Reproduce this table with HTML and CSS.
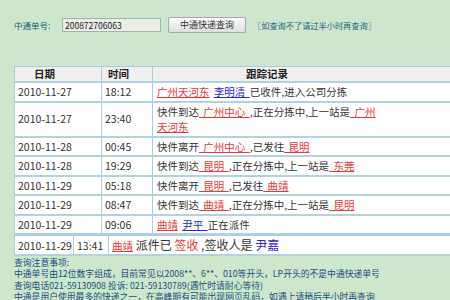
FILE: index.html
```html
<!DOCTYPE html>
<html lang="zh-CN">
<head>
<meta charset="utf-8">
<title>中通快递查询</title>
<link rel="stylesheet" href="styles.css">
</head>
<body>
<div class="page">
  <form class="search">
    <label class="label">中通单号:</label>
    <input class="num" type="text" value="200872706063">
    <button class="btn" type="button">中通快递查询</button>
    <span class="hint">〖如查询不了请过半小时再查询〗</span>
  </form>

  <table class="track">
    <colgroup><col class="c-date"><col class="c-time"><col></colgroup>
    <thead>
      <tr><th class="h-date">日期</th><th class="h-time">时间</th><th class="h-rec">跟踪记录</th></tr>
    </thead>
    <tbody>
      <tr><td>2010-11-27</td><td>18:12</td><td><div class="rec"><a class="r">广州天河东</a> <a class="b">李明清 </a>已收件,进入公司分拣</div></td></tr>
      <tr><td>2010-11-27</td><td>23:40</td><td><div class="rec">快件到达<a class="r"> 广州中心 </a>,正在分拣中,上一站是<a class="r"> 广州<br>天河东</a></div></td></tr>
      <tr><td>2010-11-28</td><td>00:45</td><td><div class="rec">快件离开<a class="r"> 广州中心 </a>,已发往<a class="r"> 昆明</a></div></td></tr>
      <tr><td>2010-11-28</td><td>19:29</td><td><div class="rec">快件到达<a class="r"> 昆明 </a>,正在分拣中,上一站是<a class="r"> 东莞</a></div></td></tr>
      <tr><td>2010-11-29</td><td>05:18</td><td><div class="rec">快件离开<a class="r"> 昆明 </a>,已发往<a class="r"> 曲靖</a></div></td></tr>
      <tr><td>2010-11-29</td><td>08:47</td><td><div class="rec">快件到达<a class="r"> 曲靖 </a>,正在分拣中,上一站是<a class="r"> 昆明</a></div></td></tr>
      <tr><td>2010-11-29</td><td>09:06</td><td><div class="rec"><a class="r">曲靖</a> <a class="b">尹平 </a>正在派件</div></td></tr>
    </tbody>
  </table>

  <table class="track last">
    <colgroup><col class="l-date"><col class="l-time"><col></colgroup>
    <tbody>
      <tr><td>2010-11-29</td><td>13:41</td><td class="big"><a class="r">曲靖</a> 派件已 <span class="red">签收</span> ,签收人是 <span class="blue">尹嘉</span></td></tr>
    </tbody>
  </table>

  <div class="notes">
    <p>查询注意事项:</p>
    <p>中通单号由12位数字组成，目前常见以2008**、6**、010等开头，LP开头的不是中通快递单号</p>
    <p>查询电话021-59130908 投诉: 021-59130789(遇忙时请耐心等待)</p>
    <p>中通是用户使用最多的快递之一，在高峰期有可能出现网页乱码，如遇上请稍后半小时再查询</p>
  </div>
</div>
</body>
</html>
```

FILE: styles.css
```css
html, body {
  margin: 0;
  padding: 0;
  overflow: hidden;
  background: #cde7cc;
}
body {
  font-family: "Noto Sans CJK SC", "Liberation Sans", sans-serif;
  color: #333;
}
.page {
  padding: 17px 0 0 14px;
  width: 500px;
}
.search {
  display: flex;
  align-items: center;
  height: 16px;
  margin: 0 0 33px 0;
}
.label {
  font-size: 8.5px;
  color: #1d5b7c;
  width: 48px;
}
.num {
  box-sizing: border-box;
  width: 99px;
  height: 14px;
  border: 1px solid #a9b0a9;
  background: #e8eee6;
  font-family: "Noto Sans CJK SC", sans-serif;
  font-size: 8.5px;
  color: #222;
  padding: 0 2px;
  margin: 0;
  line-height: 12px;
}
.btn {
  box-sizing: border-box;
  width: 78px;
  height: 16px;
  margin: 0 0 0 7px;
  padding: 0;
  border: 1px solid #a8a8a8;
  border-radius: 2px;
  background: linear-gradient(#fbfbfb, #dedede);
  font-family: "Noto Sans CJK SC", sans-serif;
  font-size: 9px;
  color: #333;
  line-height: 14px;
}
.hint {
  margin-left: 7px;
  font-size: 8.2px;
  color: #1f6282;
}
.track {
  border-collapse: collapse;
  table-layout: fixed;
  width: 480px;
  background: #fff;
  font-size: 10.5px;
}
.c-date { width: 87px; }
.c-time { width: 51px; }
.l-date { width: 59px; }
.l-time { width: 35px; }
.track th, .track td {
  border-left: 1px solid #a9cde0;
  border-right: 1px solid #a9cde0;
  border-bottom: 2px solid #b3d2e0;
  text-align: left;
  vertical-align: middle;
  white-space: nowrap;
}
.track th {
  background: #efefef;
  border-top: 1px solid #a9cde0;
  font-weight: bold;
  color: #222;
  line-height: 14px;
  padding: 0;
  font-size: 10.5px;
}
.h-date { padding-left: 19px !important; }
.h-time { padding-left: 6px !important; }
.h-rec { padding-left: 93px !important; }
.track td {
  padding: 1px 3px;
  line-height: 15.5px;
}
.track td:last-child { padding-left: 4px; }
.rec {
  word-spacing: 2px;
}
.track.last td {
  border-top: 1px solid #a9cde0;
  line-height: 17px;
  padding: 0 3px;
}
.track.last td.big { font-size: 12px; }
.track.last td.big .r { font-size: 10.5px; }
a.r, .red { color: #e8393a; }
a.r { text-decoration: underline; }
a.b { color: #2a2ad0; text-decoration: underline; }
.blue { color: #2a2ad0; }
.notes {
  font-size: 8.8px;
  line-height: 11.3px;
  color: #1b4f7e;
  margin-top: 1px;
}
.notes p { margin: 0; white-space: nowrap; }
```
